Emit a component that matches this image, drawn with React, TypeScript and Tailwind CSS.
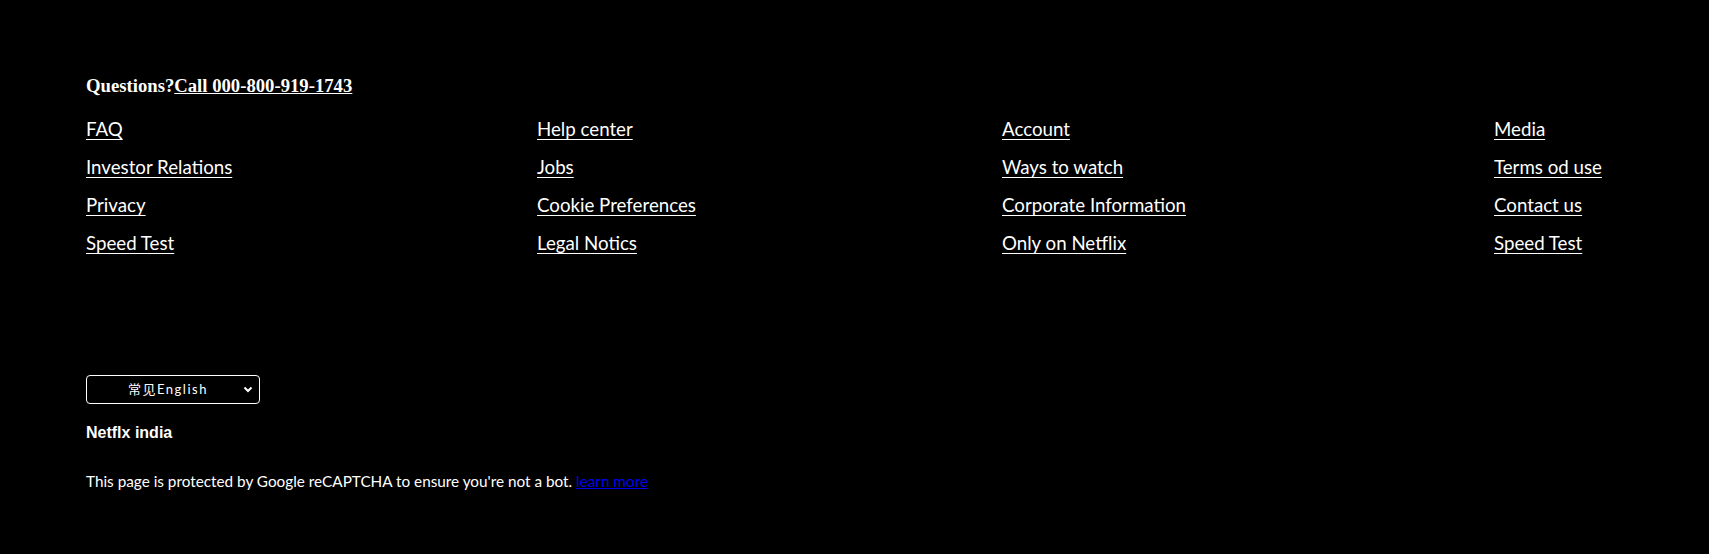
import React from "react";

const cols: string[][] = [
  ["FAQ", "Investor Relations", "Privacy", "Speed Test"],
  ["Help center", "Jobs", "Cookie Preferences", "Legal Notics"],
  ["Account", "Ways to watch", "Corporate Information", "Only on Netflix"],
  ["Media", "Terms od use", "Contact us", "Speed Test"],
];

export default function App() {
  return (
    <div className="w-full h-[554px] bg-black text-white pl-[86px] pt-[75px] font-['Lato','Noto_Sans',sans-serif]">
      <p className="text-[18.7px] leading-[22px] font-bold font-['Liberation_Serif',serif]">
        Questions?<a href="#" className="underline">Call 000-800-919-1743</a>
      </p>
      <div className="mt-[13px] grid grid-cols-[451px_465px_492px_auto]">
        {cols.map((col, i) => (
          <ul key={i} className="flex flex-col">
            {col.map((t) => (
              <li key={t} className="text-[18.7px] leading-[38px]">
                <a href="#" className="underline underline-offset-[3px]">
                  {t}
                </a>
              </li>
            ))}
          </ul>
        ))}
      </div>
      <div className="mt-[113px] w-[174px] h-[29px] border border-white rounded-[4px] flex items-center pl-[6px] pr-[6px]">
        <span className="flex-1 text-center text-[13px] tracking-[1.5px] font-['Lato','Noto_Sans_CJK_SC',sans-serif]">
          常见English
        </span>
        <svg width="10" height="7" viewBox="0 0 10 7" className="shrink-0">
          <path d="M1.5 1.5 L5 5 L8.5 1.5" fill="none" stroke="white" strokeWidth="2" />
        </svg>
      </div>
      <p className="mt-[20px] text-[16px] leading-[18px] font-bold font-['Liberation_Sans',sans-serif]">Netflx india</p>
      <p className="mt-[29px] text-[15.3px] leading-[20px]">
        This page is protected by Google reCAPTCHA to ensure you're not a bot.{" "}
        <a href="#" className="underline text-[#0000ee]">learn more</a>
      </p>
    </div>
  );
}
